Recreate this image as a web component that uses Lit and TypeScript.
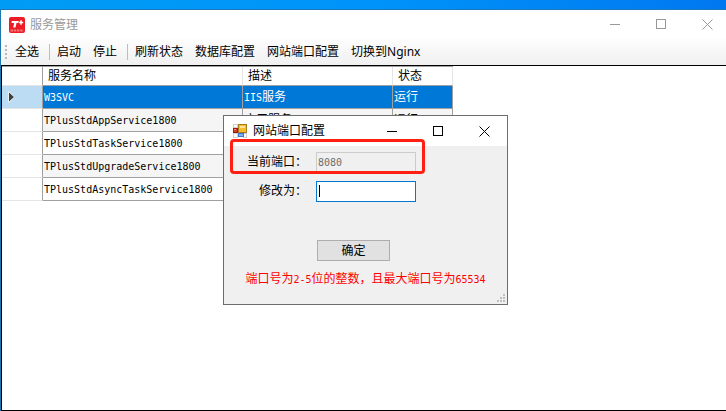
import { LitElement, html, css, svg } from "lit";
import { customElement, property, state } from "lit/decorators.js";

interface Service {
  name: string;
  desc: string;
  status: string;
}

const SERVICES: Service[] = [
  { name: "W3SVC", desc: "IIS服务", status: "运行" },
  { name: "TPlusStdAppService1800", desc: "应用服务", status: "运行" },
  { name: "TPlusStdTaskService1800", desc: "", status: "" },
  { name: "TPlusStdUpgradeService1800", desc: "", status: "" },
  { name: "TPlusStdAsyncTaskService1800", desc: "", status: "" },
];

const TOOL_GROUPS = [
  ["全选"],
  ["启动", "停止"],
  ["刷新状态", "数据库配置", "网站端口配置", "切换到Nginx"],
];

/** Latin runs are set in a half-width face, beside full-width Chinese. */
const mixed = (text: string) =>
  text
    .split(/([\x20-\x7e]+)/)
    .filter(Boolean)
    .map((run) => (/^[\x20-\x7e]/.test(run) ? html`<span class="half">${run}</span>` : run));

@customElement("window-controls")
class WindowControls extends LitElement {
  static styles = css`
    :host {
      display: flex;
      align-self: stretch;
      margin-left: auto;
    }
    button {
      display: grid;
      place-items: center;
      width: 46px;
      padding: 0;
      border: 0;
      background: none;
      color: inherit;
    }
    svg {
      display: block;
      width: 11px;
      height: 11px;
      fill: none;
      stroke: currentColor;
    }
  `;

  render() {
    const shapes: [string, unknown][] = [
      ["最小化", svg`<path d="M0 5.5H10" shape-rendering="crispEdges" />`],
      ["最大化", svg`<path d="M.5 .5H9.500V9.500H.5Z" shape-rendering="crispEdges" />`],
      ["关闭", svg`<path d="M.5 .5L10.500 10.500M10.500 .5L.5 10.500" />`],
    ];
    return shapes.map(
      ([label, shape]) =>
        html`<button type="button" aria-label=${label}><svg viewBox="0 0 11 11">${shape}</svg></button>`
    );
  }
}

@customElement("port-dialog")
class PortDialog extends LitElement {
  @property() port = "8080";
  @state() private next = "";

  static styles = css`
    :host {
      display: block;
      box-sizing: border-box;
      border: 1px solid #6d6d6d;
      background: #f0f0f0;
      color: #000;
    }
    header {
      display: flex;
      align-items: center;
      gap: 6px;
      height: 30px;
      padding-left: 9px;
      background: #fff;
    }
    .icon {
      width: 14px;
      height: 14px;
    }
    h2 {
      margin: 0;
      font: inherit;
    }
    form {
      display: grid;
      grid-template-columns: 83px 100px;
      column-gap: 9px;
      row-gap: 8px;
      padding-top: 6px;
    }
    label {
      text-align: right;
      line-height: 20px;
    }
    input {
      box-sizing: border-box;
      width: 100%;
      height: 21px;
      padding: 0 1px;
      border: 1px solid #ccc;
      border-radius: 0;
      outline: 0;
      background: #f0f0f0;
      color: #6d6d6d;
      font: 10px "DejaVu Sans Mono", monospace;
    }
    .field {
      display: flex;
      position: relative;
    }
    .field .next {
      border-color: #0078d7;
      background: #fff;
      color: #000;
    }
    .caret {
      position: absolute;
      left: 3px;
      top: 4px;
      width: 1px;
      height: 12px;
      background: #000;
    }
    .ok {
      grid-column: 2;
      box-sizing: border-box;
      width: 73px;
      height: 21px;
      margin: 30px 0 0 1px;
      padding: 0;
      border: 1px solid #adadad;
      background: #e1e1e1;
      color: #000;
      font: inherit;
    }
    .hint {
      margin: 8px 0 0;
      color: #f00;
      line-height: 20px;
      text-align: center;
      white-space: nowrap;
    }
    .half {
      font: 10px "DejaVu Sans Mono", monospace;
    }
    .mark {
      position: absolute;
      left: 6px;
      top: 23px;
      box-sizing: border-box;
      width: 195px;
      height: 35px;
      border: 3px solid #ff2012;
      border-radius: 4px;
      pointer-events: none;
    }
    .grip {
      position: absolute;
      right: 1px;
      bottom: 1px;
      width: 9px;
      height: 9px;
      fill: #bfbfbf;
    }
  `;

  render() {
    return html`
      <header>
        <svg class="icon" viewBox="0 0 14 14" aria-hidden="true" shape-rendering="crispEdges">
          <path d="M.5 .5H4.500V3.500H.5ZM.5 9.500H4.500V13.500H.5ZM10.500 9.500H13.500V13.500H10.500Z" fill="#fff" stroke="#cfcfcf" />
          <path d="M5 0H14V9H5Z" fill="#a87b1c" />
          <path d="M6 1H13V8H6Z" fill="#f3bd2e" />
          <path d="M7 2H12V4H7Z" fill="#ffe694" />
          <path d="M0 4H5V9H0Z" fill="#a3160f" />
          <path d="M1 5H4V8H1Z" fill="#d8382c" />
          <path d="M1 5H3V6H1Z" fill="#f39b90" />
          <path d="M5 9H11V13H5Z" fill="#3f77cf" />
          <path d="M6 10H10V12H6Z" fill="#7fb0f5" />
        </svg>
        <h2>网站端口配置</h2>
        <window-controls></window-controls>
      </header>
      <form @submit=${(e: Event) => e.preventDefault()}>
        <label for="current">当前端口：</label>
        <div class="field"><input id="current" .value=${this.port} disabled /></div>
        <label for="next">修改为：</label>
        <div class="field">
          <input
            id="next"
            class="next"
            inputmode="numeric"
            .value=${this.next}
            @input=${(e: Event) => (this.next = (e.target as HTMLInputElement).value)}
          />
          ${this.next ? "" : html`<span class="caret"></span>`}
        </div>
        <button class="ok">确定</button>
      </form>
      <p class="hint">${mixed("端口号为2-5位的整数，且最大端口号为65534")}</p>
      <span class="mark"></span>
      <svg class="grip" viewBox="0 0 9 9" aria-hidden="true">
        <path d="M6 0h2v2h-2zM3 3h2v2h-2zM6 3h2v2h-2zM0 6h2v2h-2zM3 6h2v2h-2zM6 6h2v2h-2z" />
      </svg>
    `;
  }
}

@customElement("app-root")
class AppRoot extends LitElement {
  @state() private selected = 0;

  static styles = css`
    :host {
      display: flex;
      flex-direction: column;
      position: relative;
      box-sizing: border-box;
      min-height: 100vh;
      padding-top: 9px;
      overflow: hidden;
      background: linear-gradient(90deg, #009cf4, #0094fa 50%, #0078f0);
      color: #000;
      font: 12px/16px "Noto Sans", "Noto Sans CJK SC", sans-serif;
    }
    .window {
      display: flex;
      flex: 1;
      flex-direction: column;
      border-top: 1px solid #1a78bc;
      border-left: 1px solid #1a78ac;
      background: #fff;
    }
    .title {
      display: flex;
      align-items: center;
      gap: 5px;
      height: 29px;
      margin-right: -4px;
      padding-left: 8px;
      color: #999;
    }
    .logo {
      width: 16px;
      height: 16px;
    }
    h1 {
      margin: 0;
      font: inherit;
    }
    .toolbar {
      display: flex;
      align-items: center;
      height: 26px;
      padding-left: 4px;
      background: linear-gradient(#fdfdfd, #f0f0f0);
    }
    .handle {
      width: 2px;
      height: 14px;
      margin-right: 2px;
      background: repeating-linear-gradient(#b8b8b8 0 2px, transparent 2px 4px);
    }
    .group {
      display: flex;
    }
    .group + .group {
      margin-left: 4px;
      border-left: 1px solid #bdbdbd;
      padding-left: 1px;
    }
    .group button {
      padding: 0 6px;
      border: 0;
      background: none;
      color: inherit;
      font: inherit;
      white-space: nowrap;
    }
    .list {
      flex: 1;
      border: solid #000;
      border-width: 1px 0 1px 1px;
    }
    table {
      width: 451px;
      border-collapse: separate;
      border-spacing: 0;
      border-top: 1px solid #a0a0a0;
      table-layout: fixed;
      line-height: 16px;
    }
    .col-mark {
      width: 41px;
    }
    .col-name {
      width: 200px;
    }
    .col-desc {
      width: 150px;
    }
    .col-status {
      width: 60px;
    }
    th,
    td {
      box-sizing: border-box;
      height: 23px;
      padding: 0 1px;
      border: solid #a0a0a0;
      border-width: 0 1px 1px 0;
      font-weight: 400;
      text-align: left;
      white-space: nowrap;
    }
    thead th {
      height: 19px;
      padding: 0 5px;
      border-right-color: #e5e5e5;
    }
    thead th:first-child,
    tbody th {
      border-color: #e5e5e5;
      border-right-color: #a0a0a0;
    }
    tbody th {
      padding: 0 6px;
    }
    tbody tr:nth-child(even) td {
      background: #f5f5f5;
    }
    tbody .selected td {
      background: #0078d7;
      color: #fff;
    }
    tbody .selected th {
      background: #bcdcf4;
    }
    .arrow {
      display: block;
      width: 7px;
      height: 12px;
      fill: #404040;
      stroke: #e6f1fa;
    }
    .half {
      font: 10px "DejaVu Sans Mono", monospace;
    }
    port-dialog {
      position: absolute;
      left: 223px;
      top: 115px;
      width: 285px;
      height: 190px;
    }
  `;

  render() {
    return html`
      <main class="window">
        <header class="title">
          <svg class="logo" viewBox="0 0 16 16" aria-hidden="true">
            <rect width="16" height="16" rx="2" fill="#ee1c25" />
            <path d="M2.900 4H9.800L9.300 6H7.500L6.500 10.500H4.200L5.200 6H2.400Z" fill="#fff" />
            <path d="M12 3.200V7.800M9.900 5.500H14.200" stroke="#fff" stroke-width="1.500" />
            <path d="M1.500 13.500H14.500" stroke="#f4777c" stroke-width="1.800" stroke-dasharray="2.500 .7" />
          </svg>
          <h1>服务管理</h1>
          <window-controls></window-controls>
        </header>
        <nav class="toolbar">
          <span class="handle"></span>
          ${TOOL_GROUPS.map(
            (group) => html`<div class="group">
              ${group.map((label) => html`<button type="button">${label}</button>`)}
            </div>`
          )}
        </nav>
        <section class="list">
          <table>
            <colgroup>
              <col class="col-mark" />
              <col class="col-name" />
              <col class="col-desc" />
              <col class="col-status" />
            </colgroup>
            <thead>
              <tr>
                <th></th>
                <th scope="col">服务名称</th>
                <th scope="col">描述</th>
                <th scope="col">状态</th>
              </tr>
            </thead>
            <tbody>
              ${SERVICES.map(
                (s, i) => html`<tr
                  class=${i === this.selected ? "selected" : ""}
                  @click=${() => (this.selected = i)}
                >
                  <th>
                    ${i === this.selected
                      ? html`<svg class="arrow" viewBox="0 0 7 12"><path d="M.5 .5L6.500 6L.5 11.500Z" /></svg>`
                      : ""}
                  </th>
                  <td>${mixed(s.name)}</td>
                  <td>${mixed(s.desc)}</td>
                  <td>${mixed(s.status)}</td>
                </tr>`
              )}
            </tbody>
          </table>
        </section>
      </main>
      <port-dialog role="dialog" aria-label="网站端口配置"></port-dialog>
    `;
  }
}
